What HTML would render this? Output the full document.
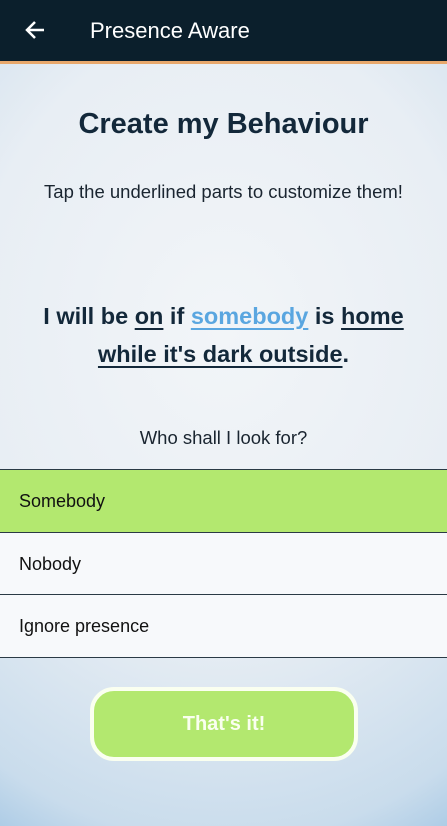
<!DOCTYPE html>
<html><head><meta charset="utf-8"><style>
*{margin:0;padding:0;box-sizing:border-box}
body{width:447px;height:826px;overflow:hidden;font-family:"Liberation Sans",sans-serif;position:relative;
background:radial-gradient(ellipse 500px 600px at 50% 40%,#f2f5f8 0%,#e8eef4 50%,#c9dcec 85%,#9cc2e2 100%);}
.hdr{position:absolute;top:0;left:0;width:447px;height:64px;background:#0b1f2c;border-bottom:3px solid #e8a86c}
.hdr .t{position:absolute;left:90px;top:18px;color:#fff;font-size:22px}
.hdr svg{position:absolute;left:24px;top:19px}
h1{position:absolute;top:108px;width:100%;text-align:center;font-size:29px;color:#13283a;font-weight:bold}
.sub{position:absolute;top:181px;width:100%;text-align:center;font-size:18.5px;color:#1a2530}
.sent{position:absolute;top:297px;width:100%;text-align:center;font-size:23.5px;font-weight:bold;color:#13283a;line-height:38px}
.sent u{text-underline-offset:4px}
.sent .b{color:#5aa6e0}
.q{position:absolute;top:427px;width:100%;text-align:center;font-size:18.5px;color:#1a2530}
.opt{position:absolute;left:0;width:447px;height:63px;border-top:1px solid #2a3a45;font-size:18px;color:#111;padding:21px 0 0 19px;background:#f7f9fb}
.btn{position:absolute;left:90px;top:687px;width:268px;height:74px;border:4px solid #fafff0;border-radius:24px;background:#b3e86f;color:#fafff0;font-weight:bold;font-size:20px;text-align:center;line-height:66px}
</style></head><body>
<div class="hdr"><svg width="22" height="22" viewBox="0 0 22 22"><path d="M20 11H3M11 3L3 11l8 8" stroke="#fff" stroke-width="2.5" fill="none"/></svg><div class="t">Presence Aware</div></div>
<h1>Create my Behaviour</h1>
<div class="sub">Tap the underlined parts to customize them!</div>
<div class="sent">I will be <u>on</u> if <u class="b">somebody</u> is <u>home</u><br><u>while it's dark outside</u>.</div>
<div class="q">Who shall I look for?</div>
<div class="opt" style="top:469px;background:#b3e86f">Somebody</div>
<div class="opt" style="top:532px">Nobody</div>
<div class="opt" style="top:594px;border-bottom:1px solid #2a3a45;height:64px">Ignore presence</div>
<div class="btn">That's it!</div>
</body></html>
